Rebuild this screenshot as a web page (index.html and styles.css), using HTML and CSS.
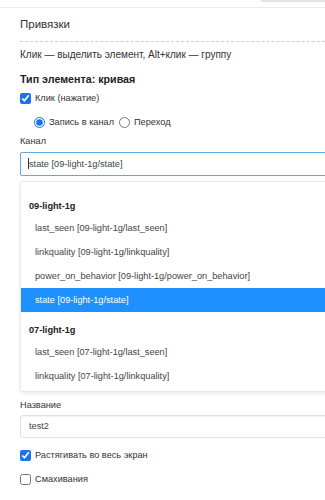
FILE: index.html
```html
<!DOCTYPE html>
<html lang="ru">
<head>
    <meta charset="UTF-8">
    <meta name="viewport" content="width=device-width, initial-scale=1.0">
    <title>Привязки</title>
    <link rel="stylesheet" href="styles.css">
</head>
<body>

<div class="topbar"><span class="tab"></span></div>

<div class="panel">
    <h2 class="title">Привязки</h2>
    <p class="hint">Клик — выделить элемент, Alt+клик — группу</p>

    <h3 class="type">Тип элемента: кривая</h3>
    <label class="check"><input type="checkbox" checked> Клик (нажатие)</label>

    <div class="radios">
        <label><input type="radio" name="action" checked> Запись в канал</label>
        <label><input type="radio" name="action"> Переход</label>
    </div>

    <!-- Канал с открытым списком -->
    <label class="field-label">Канал</label>
    <div class="text-input focused"><span class="caret"></span>state [09-light-1g/state]</div>

    <ul class="dropdown">
        <li class="group">09-light-1g</li>
        <li class="option">last_seen [09-light-1g/last_seen]</li>
        <li class="option">linkquality [09-light-1g/linkquality]</li>
        <li class="option">power_on_behavior [09-light-1g/power_on_behavior]</li>
        <li class="option selected">state [09-light-1g/state]</li>
        <li class="group">07-light-1g</li>
        <li class="option">last_seen [07-light-1g/last_seen]</li>
        <li class="option">linkquality [07-light-1g/linkquality]</li>
    </ul>

    <label class="field-label name-label">Название</label>
    <div class="text-input">test2</div>

    <label class="check stretch"><input type="checkbox" checked> Растягивать во весь экран</label>
    <label class="check swipe"><input type="checkbox"> Смахивания</label>
</div>

</body>
</html>
```

FILE: styles.css
```css
/* Общие стили */
body {
    margin: 0;
    font-family: "Liberation Sans", Arial, sans-serif;
    font-size: 9.2px;
    color: #333;
    background: #fff;
    overflow: hidden;
}

.topbar {
    height: 7px;
    border-bottom: 1px solid #ebebeb;
    position: relative;
}

.topbar .tab {
    position: absolute;
    right: -10px;
    top: -4px;
    width: 75px;
    height: 6px;
    background: #e4e4e4;
    border-radius: 3px;
}

.panel {
    padding-left: 20px;
    width: 340px;
}

.title {
    margin: 6px 0 0;
    padding-bottom: 7px;
    line-height: 20px;
    font-size: 11.5px;
    font-weight: normal;
    color: #333;
    border-bottom: 1px dashed #ccc;
}

.hint {
    margin: 6px 0 0;
    line-height: 14px;
    font-size: 10px;
}

.type {
    margin: 9px 0 0;
    line-height: 16px;
    font-size: 10.7px;
    font-weight: bold;
    color: #222;
}

/* Флажки и переключатели */
.check {
    display: flex;
    align-items: center;
    gap: 4px;
    height: 16px;
    margin-top: 3px;
}

.check input,
.radios input {
    margin: 0;
    width: 11px;
    height: 11px;
    accent-color: #1a73e8;
}

.radios {
    display: flex;
    gap: 5px;
    height: 16px;
    margin-top: 8px;
    padding-left: 14px;
}

.radios label {
    display: flex;
    align-items: center;
    gap: 4px;
}

.field-label {
    display: block;
    margin-top: 4px;
    line-height: 14px;
}

.text-input {
    margin-top: 4px;
    height: 22px;
    line-height: 22px;
    padding: 0 8px;
    border: 1px solid #e2e2e2;
    border-radius: 2px;
    box-shadow: inset 0 1px 2px rgba(0, 0, 0, 0.06);
    color: #444;
}

.text-input.focused {
    border-color: #5aa9e6;
    box-shadow: none;
    padding-left: 7px;
}

.caret {
    display: inline-block;
    width: 1px;
    height: 11px;
    background: #333;
    vertical-align: -2px;
}

/* Выпадающий список */
.dropdown {
    list-style: none;
    margin: 5px 0 0;
    padding: 6px 0 3px;
    border: 1px solid #e8e8e8;
    border-radius: 2px;
    box-shadow: 0 2px 4px rgba(0, 0, 0, 0.08);
}

.dropdown .group {
    height: 20px;
    line-height: 20px;
    padding: 8px 0 0 8px;
    font-weight: bold;
    color: #222;
}

.dropdown .option {
    height: 24px;
    line-height: 24px;
    padding-left: 14px;
    color: #444;
}

.dropdown .option.selected {
    background: #1e90ff;
    color: #fff;
}

.name-label {
    margin-top: 6px;
}

.name-label + .text-input {
    margin-top: 3px;
    height: 21px;
    line-height: 21px;
}

.stretch {
    margin-top: 9px;
}

.swipe {
    margin-top: 8px;
}
```
